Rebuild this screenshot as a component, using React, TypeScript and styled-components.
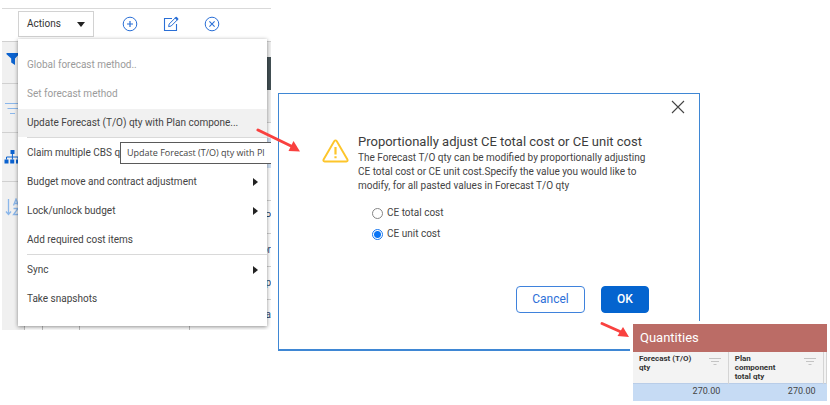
import React from 'react';
import styled, { createGlobalStyle } from 'styled-components';

const GlobalStyle = createGlobalStyle`
  * { box-sizing: border-box; }
  body {
    margin: 0;
    background: #fff;
    color: #444;
    font-family: Roboto, 'Liberation Sans', sans-serif;
    font-size: 10px;
    line-height: 14px;
  }
  button { font: inherit; color: inherit; cursor: pointer; }
`;

const Page = styled.main`
  position: relative;
  display: grid;
  grid-template-columns: minmax(0, 269fr) minmax(0, 422fr) minmax(0, 121fr);
  column-gap: 7px;
  align-items: start;
  padding: 8px 2px 0;
  min-height: 405px;
  overflow: hidden;
`;

/* ---------- cost sheet panel ---------- */

const SheetPanel = styled.section`
  position: relative;
  overflow: hidden;
  border-top: 1px solid #d9d9d9;
`;

const Toolbar = styled.div`
  display: flex;
  align-items: center;
  height: 33px;
  padding: 0 16px 2px;
  border-bottom: 1px solid #d0d0d0;
`;

const ActionsButton = styled.button`
  display: flex;
  align-items: center;
  justify-content: space-between;
  width: 76px;
  height: 26px;
  margin-right: 28px;
  padding: 0 8px;
  border: 1px solid #d2d2d2;
  background: #fff;
  color: #333;
`;

const IconButton = styled.button`
  display: flex;
  width: 16px;
  height: 16px;
  margin-right: 25px;
  padding: 0;
  border: 0;
  background: none;
  color: #2a6fd6;
`;

const SheetBody = styled.div`
  display: grid;
  grid-template-columns: 22px 1fr;
`;

const Rail = styled.nav`
  background: #f0f0f0;
`;

const RailButton = styled.button`
  display: flex;
  align-items: center;
  width: 100%;
  height: 49px;
  padding: 0 0 0 2px;
  border: 0;
  border-bottom: 1px solid #d0d0d0;
  background: none;

  &:first-child { height: 42px; padding-bottom: 8px; }
  &:last-child { border-bottom: 0; }
`;

const tones = {
  plain: '#fff',
  head: '#f0f0f0',
  dark: '#435054',
  active: '#cfe0f4',
};

const SheetRow = styled.div<{ $h: number; $tone?: keyof typeof tones; $line?: boolean }>`
  display: grid;
  grid-template-columns: 18px 37px 110px 1fr;
  height: ${(p) => p.$h}px;
  background: ${(p) => tones[p.$tone ?? 'plain']};
  border-bottom: ${(p) => (p.$line ? '1px solid #d0d0d0' : '0')};
`;

const SheetCell = styled.div`
  display: flex;
  align-items: center;
  border-left: 1px solid #bdbdbd;
  color: #2c4a73;
`;

const CellTail = styled.span`
  margin-left: auto;
  white-space: nowrap;
`;

const Menu = styled.div`
  position: absolute;
  top: 30px;
  left: 16px;
  right: 4px;
  padding: 12px 0 13px;
  background: #fff;
  box-shadow: 0 1px 4px rgba(0, 0, 0, 0.45);
`;

const MenuGroup = styled.div`
  position: relative;
  display: grid;
  row-gap: 1px;

  & + & { padding-top: 2px; }
  & + &::before {
    content: '';
    position: absolute;
    top: 0;
    left: 9px;
    right: 0;
    height: 1px;
    background: #d9d9d9;
  }
`;

const MenuItem = styled.button<{ $active?: boolean }>`
  display: flex;
  align-items: center;
  justify-content: space-between;
  height: 28px;
  padding: 0 9px;
  border: 0;
  background: ${(p) => (p.$active ? '#f1f1f1' : 'transparent')};
  text-align: left;
  white-space: nowrap;

  &:disabled { color: #9b9b9b; }
`;

const Tooltip = styled.div`
  position: absolute;
  top: 133px;
  left: 118px;
  right: 0;
  padding: 3px 0 3px 6px;
  border: 1px solid #5a5a5a;
  border-right: 0;
  background: #fff;
  color: #444;
  font: 9px/14px 'Open Sans', 'Noto Sans', sans-serif;
  white-space: nowrap;
`;

/* ---------- dialog ---------- */

const Dialog = styled.section`
  display: flex;
  flex-direction: column;
  min-height: 258px;
  margin-top: 85px;
  border: 1px solid #3f87d4;
  border-bottom-width: 2px;
  background: #fff;
`;

const CloseButton = styled.button`
  display: flex;
  align-self: flex-end;
  margin: 6px 14px 0 0;
  padding: 0;
  border: 0;
  background: none;
  color: #444;
`;

const DialogBody = styled.div`
  display: grid;
  grid-template-columns: 27px 1fr;
  column-gap: 9px;
  margin: 19px 16px 0 43px;
`;

const WarningIcon = styled.svg`
  margin-top: 6px;
`;

const DialogTitle = styled.h2`
  margin: 0;
  font-size: 13px;
  font-weight: 400;
  line-height: 18px;
  color: #3c3c3c;
  white-space: nowrap;
`;

const DialogText = styled.p`
  margin: 0;
  white-space: nowrap;
`;

const Choices = styled.fieldset`
  display: grid;
  row-gap: 7px;
  margin: 13px 0 0;
  padding: 0 0 0 14px;
  border: 0;
`;

const Choice = styled.label`
  display: flex;
  align-items: center;
  column-gap: 4px;
`;

const Radio = styled.input`
  appearance: none;
  width: 11px;
  height: 11px;
  margin: 0;
  border: 1px solid #858585;
  border-radius: 50%;
  background: #fff;

  &:checked {
    border-color: #1a78ee;
    background: radial-gradient(circle, #0a75f5 3px, #fff 4px);
  }
`;

const DialogActions = styled.div`
  display: flex;
  justify-content: flex-end;
  column-gap: 16px;
  margin-top: auto;
  padding: 0 50px 36px 0;
`;

const DialogButton = styled.button<{ $primary?: boolean }>`
  width: ${(p) => (p.$primary ? 48 : 69)}px;
  height: 27px;
  padding: 0 0 2px;
  border: 1px solid ${(p) => (p.$primary ? '#0464cf' : '#3f82dc')};
  border-radius: 4px;
  background: ${(p) => (p.$primary ? '#0464cf' : '#fff')};
  color: ${(p) => (p.$primary ? '#fff' : '#2d6fd8')};
  font-size: 12px;
  font-weight: ${(p) => (p.$primary ? 500 : 400)};
`;

/* ---------- quantities table ---------- */

const QuantityCard = styled.section`
  position: absolute;
  top: 321px;
  right: 3px;
  width: 197px;
  padding: 3px 0 0 3px;
  background: #fff;
`;

const QuantityTable = styled.table`
  width: 100%;
  border-collapse: collapse;
  table-layout: fixed;
`;

const QuantityCaption = styled.caption`
  padding: 0 7px;
  background: #bb6c66;
  color: #fff;
  font-size: 13px;
  line-height: 28px;
  text-align: left;
`;

const HeadCell = styled.th`
  height: 31px;
  padding: 2px 7px 0 6px;
  border-right: 1px solid #d4d4d4;
  background: #f3f3f3;
  color: #333;
  font-size: 8px;
  font-weight: 700;
  line-height: 9px;
  text-align: left;
  vertical-align: top;
`;

const HeadInner = styled.div`
  display: flex;
  justify-content: space-between;
`;

const FilterIcon = styled.svg`
  margin-top: 3px;
`;

const DataCell = styled.td`
  height: 18px;
  padding: 0 8px;
  border-top: 1px solid #b9cde8;
  background: #c6dbf4;
  color: #444;
  font-size: 9px;
  line-height: 14px;
  text-align: right;
  vertical-align: top;
`;

const Arrow = styled.svg<{ $x: number; $y: number }>`
  position: absolute;
  left: ${(p) => p.$x}px;
  top: ${(p) => p.$y}px;
  pointer-events: none;
`;

const SubmenuMark = () => (
  <svg width="5" height="8" viewBox="0 0 5 8" aria-hidden="true">
    <path d="M0 0L5 4L0 8Z" fill="#222" />
  </svg>
);

const FilterMark = () => (
  <FilterIcon width="12" height="9" viewBox="0 0 12 9" aria-hidden="true">
    <path d="M0 1.5H12M2 4.5H10M4.5 7.5H7.5" stroke="#c4c4c4" strokeWidth="1" />
  </FilterIcon>
);

const sheetRows: { h: number; tone?: keyof typeof tones; line?: boolean; text?: string }[] = [
  { h: 15, tone: 'head' },
  { h: 33, tone: 'dark' },
  { h: 33, tone: 'head', line: true },
  { h: 15 },
  { h: 30, tone: 'active' },
  { h: 33, line: true },
  { h: 33, line: true, text: 'P' },
  { h: 33, line: true, text: 'or' },
  { h: 33, line: true, text: 'p' },
  { h: 30, text: 'Pa' },
];

export default function App() {
  return (
    <>
      <GlobalStyle />
      <Page>
        <SheetPanel>
          <Toolbar>
            <ActionsButton aria-haspopup="menu">
              Actions
              <svg width="8" height="5" viewBox="0 0 8 5" aria-hidden="true">
                <path d="M0 0H8L4 5Z" fill="#222" />
              </svg>
            </ActionsButton>
            <IconButton aria-label="Add">
              <svg width="16" height="16" viewBox="0 0 16 16" fill="none" stroke="currentColor">
                <circle cx="8" cy="8" r="6.8" />
                <path d="M8 5V11M5 8H11" strokeWidth="1.2" />
              </svg>
            </IconButton>
            <IconButton aria-label="Edit">
              <svg width="16" height="16" viewBox="0 0 16 16" fill="none" stroke="currentColor">
                <path d="M9 2.5H1.5V14.5H13.5V8" strokeWidth="1.1" />
                <path d="M5.6 10.6L6.2 8L12.4 1.8L14.4 3.8L8.2 10Z" />
                <path d="M11.6 1.9L12.6 0.9Q13.2 0.4 13.8 1L15.2 2.4Q15.8 3 15.2 3.6L14.2 4.6Z" fill="currentColor" stroke="none" />
              </svg>
            </IconButton>
            <IconButton aria-label="Remove">
              <svg width="16" height="16" viewBox="0 0 16 16" fill="none" stroke="currentColor">
                <circle cx="8" cy="8" r="6.8" />
                <path d="M5.4 5.4L10.6 10.6M10.6 5.4L5.4 10.6" strokeWidth="1.1" />
              </svg>
            </IconButton>
          </Toolbar>
          <SheetBody>
            <Rail aria-label="Sheet tools">
              <RailButton aria-label="Filter">
                <svg width="18" height="14" viewBox="0 0 18 14">
                  <path d="M2.5 1H15V2.2L11 6.5V13L7.2 10.5V6.5L2.5 2.2Z" fill="#0b62cf" />
                </svg>
              </RailButton>
              <RailButton aria-label="Quick filter">
                <svg width="18" height="14" viewBox="0 0 18 14">
                  <path d="M1 2.5H17M3.5 7.5H14.5M6 12.5H11" stroke="#8ab6ea" />
                </svg>
              </RailButton>
              <RailButton aria-label="Hierarchy">
                <svg width="18" height="14" viewBox="0 0 18 14">
                  <path d="M6.5 0H10.5V4H6.5ZM0.5 9.5H4.5V13.5H0.5ZM6.2 9.5H10.2V13.5H6.2ZM12 9.5H16V13.5H12Z" fill="#0b62cf" />
                  <path d="M8.4 4V9.5M2.5 9.5V7H14V9.5" fill="none" stroke="#0b62cf" />
                </svg>
              </RailButton>
              <RailButton aria-label="Sort">
                <svg width="18" height="18" viewBox="0 0 18 18" fill="none" stroke="#8ab6ea" strokeWidth="1.3">
                  <path d="M4.5 1V16M2 13.5L4.5 16.5L7 13.5" />
                  <path d="M9.5 7.5L12 1L14.5 7.5M10.3 5.5H13.7M9.5 10.5H14L9.5 16.5H14.5" />
                </svg>
              </RailButton>
            </Rail>
            <div>
              {sheetRows.map((r, i) => (
                <SheetRow key={i} $h={r.h} $tone={r.tone} $line={r.line}>
                  <SheetCell />
                  <SheetCell />
                  <SheetCell />
                  <SheetCell>
                    <CellTail>{r.text}</CellTail>
                  </SheetCell>
                </SheetRow>
              ))}
            </div>
          </SheetBody>
          <Menu role="menu" aria-label="Actions">
            <MenuGroup>
              <MenuItem role="menuitem" disabled>Global forecast method..</MenuItem>
              <MenuItem role="menuitem" disabled>Set forecast method</MenuItem>
              <MenuItem role="menuitem" $active>Update Forecast (T/O) qty with Plan compone...</MenuItem>
            </MenuGroup>
            <MenuGroup>
              <MenuItem role="menuitem">Claim multiple CBS q</MenuItem>
              <MenuItem role="menuitem" aria-haspopup="menu">Budget move and contract adjustment<SubmenuMark /></MenuItem>
              <MenuItem role="menuitem" aria-haspopup="menu">Lock/unlock budget<SubmenuMark /></MenuItem>
              <MenuItem role="menuitem">Add required cost items</MenuItem>
            </MenuGroup>
            <MenuGroup>
              <MenuItem role="menuitem" aria-haspopup="menu">Sync<SubmenuMark /></MenuItem>
              <MenuItem role="menuitem">Take snapshots</MenuItem>
            </MenuGroup>
          </Menu>
          <Tooltip role="tooltip">Update Forecast (T/O) qty with Pl</Tooltip>
        </SheetPanel>

        <Dialog role="dialog" aria-labelledby="adjust-title">
          <CloseButton aria-label="Close">
            <svg width="14" height="14" viewBox="0 0 14 14" stroke="currentColor" strokeWidth="1.1">
              <path d="M1 1L13 13M13 1L1 13" />
            </svg>
          </CloseButton>
          <DialogBody>
            <WarningIcon width="27" height="24" viewBox="0 0 27 24" fill="none" stroke="#fdc52a" aria-hidden="true">
              <path d="M12.2 2.3Q13.5 0.4 14.8 2.3L25.4 20.4Q26.2 22.3 24.3 22.5H2.7Q0.8 22.3 1.6 20.4Z" strokeWidth="1.9" />
              <path d="M13.5 8V15.5M13.5 17.2V19.2" strokeWidth="2.2" />
            </WarningIcon>
            <div>
              <DialogTitle id="adjust-title">Proportionally adjust CE total cost or CE unit cost</DialogTitle>
              <DialogText>
                The Forecast T/O qty can be modified by proportionally adjusting
                <br />
                CE total cost or CE unit cost.Specify the value you would like to
                <br />
                modify, for all pasted values in Forecast T/O qty
              </DialogText>
              <Choices aria-labelledby="adjust-title">
                <Choice><Radio type="radio" name="basis" />CE total cost</Choice>
                <Choice><Radio type="radio" name="basis" defaultChecked />CE unit cost</Choice>
              </Choices>
            </div>
          </DialogBody>
          <DialogActions>
            <DialogButton>Cancel</DialogButton>
            <DialogButton $primary>OK</DialogButton>
          </DialogActions>
        </Dialog>

        <QuantityCard>
          <QuantityTable>
            <QuantityCaption>Quantities</QuantityCaption>
            <colgroup>
              <col />
              <col />
              <col width="3" />
            </colgroup>
            <thead>
              <tr>
                <HeadCell scope="col"><HeadInner><span>Forecast (T/O)<br />qty</span><FilterMark /></HeadInner></HeadCell>
                <HeadCell scope="col"><HeadInner><span>Plan<br />component<br />total qty</span><FilterMark /></HeadInner></HeadCell>
                <HeadCell as="td" />
              </tr>
            </thead>
            <tbody>
              <tr>
                <DataCell>270.00</DataCell>
                <DataCell>270.00</DataCell>
                <DataCell />
              </tr>
            </tbody>
          </QuantityTable>
        </QuantityCard>

        <Arrow $x={256} $y={128} width="46" height="26" viewBox="0 0 46 26" aria-hidden="true">
          <path d="M2 2L35 18" stroke="#f9413f" strokeWidth="3" strokeLinecap="round" />
          <path d="M37.5 13L44 23.5L32.5 23Z" fill="#f9413f" />
        </Arrow>
        <Arrow $x={599} $y={321} width="32" height="18" viewBox="0 0 32 18" aria-hidden="true">
          <path d="M3 2.5L21 10.5" stroke="#f9413f" strokeWidth="3" strokeLinecap="round" />
          <path d="M24 6L30 16L18.5 15Z" fill="#f9413f" />
        </Arrow>
      </Page>
    </>
  );
}
